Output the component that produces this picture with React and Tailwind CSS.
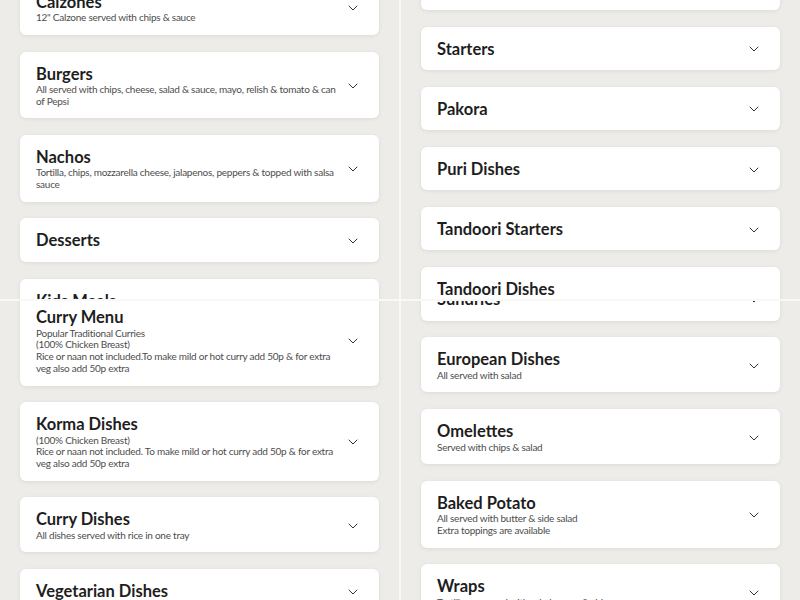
import React from "react";
import { ChevronDown } from "lucide-react";

function Card({ title, desc = [], chevron = true }) {
  return (
    <div className="flex items-center rounded-[6px] bg-white px-4 pt-[13px] pb-[11px] shadow-[0_1px_4px_rgba(0,0,0,0.08)]">
      <div className="min-w-0 flex-1">
        <div className="font-['Lato',sans-serif] text-[16.5px] font-bold leading-[19.4px] text-[#1e1e1e]">
          {title}
        </div>
        {desc.map((line, i) => (
          <div
            key={i}
            className="font-['Lato',sans-serif] text-[10px] leading-[11.67px] tracking-[-0.25px] text-[#4d4d4d]"
          >
            {line}
          </div>
        ))}
      </div>
      <div className="flex w-5 shrink-0 justify-center text-[#333333]">
        {chevron ? <ChevronDown size={16} strokeWidth={1.5} /> : null}
      </div>
    </div>
  );
}

function Tile({ offset, children }) {
  return (
    <div className="overflow-hidden bg-[#edece9]">
      <div className={`flex flex-col gap-[16.67px] px-5 ${offset}`}>{children}</div>
    </div>
  );
}

export default function App() {
  return (
    <div className="grid h-[600px] w-[800px] grid-cols-[399px_399px] grid-rows-[299px_299px] gap-[2px] bg-[#f8f8f6]">
      <Tile offset="mt-[-20.1px]">
        <Card title="Calzones" desc={['12" Calzone served with chips & sauce']} />
        <Card
          title="Burgers"
          desc={[
            "All served with chips, cheese, salad & sauce, mayo, relish & tomato & can",
            "of Pepsi",
          ]}
        />
        <Card
          title="Nachos"
          desc={[
            "Tortilla, chips, mozzarella cheese, jalapenos, peppers & topped with salsa",
            "sauce",
          ]}
        />
        <Card title="Desserts" />
        <Card title="Kids Meals" desc={["Served with chips & a drink"]} />
      </Tile>
      <Tile offset="mt-[-33.4px]">
        <Card title="Kebabs" />
        <Card title="Starters" />
        <Card title="Pakora" />
        <Card title="Puri Dishes" />
        <Card title="Tandoori Starters" />
        <Card title="Tandoori Dishes" chevron={false} />
      </Tile>
      <Tile offset="mt-[-5.6px]">
        <Card
          title="Curry Menu"
          desc={[
            "Popular Traditional Curries",
            "(100% Chicken Breast)",
            "Rice or naan not included.To make mild or hot curry add 50p & for extra",
            "veg also add 50p extra",
          ]}
        />
        <Card
          title="Korma Dishes"
          desc={[
            "(100% Chicken Breast)",
            "Rice or naan not included. To make mild or hot curry add 50p & for extra",
            "veg also add 50p extra",
          ]}
        />
        <Card title="Curry Dishes" desc={["All dishes served with rice in one tray"]} />
        <Card title="Vegetarian Dishes" />
      </Tile>
      <Tile offset="mt-[-23.7px]">
        <Card title="Sundries" />
        <Card title="European Dishes" desc={["All served with salad"]} />
        <Card title="Omelettes" desc={["Served with chips & salad"]} />
        <Card
          title="Baked Potato"
          desc={["All served with butter & side salad", "Extra toppings are available"]}
        />
        <Card title="Wraps" desc={["Tortillas wrapped with salad, sauce & chips"]} />
      </Tile>
    </div>
  );
}
